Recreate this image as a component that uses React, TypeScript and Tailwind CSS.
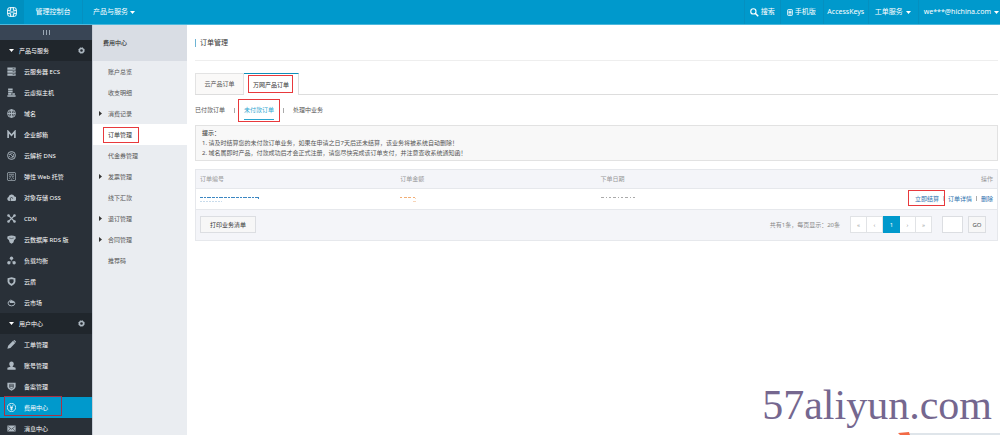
import React from "react";

type IconName =
  | "server" | "host" | "globe" | "mail" | "dns" | "web" | "cloud" | "cdn" | "rds"
  | "slb" | "shield" | "market" | "pen" | "user" | "badge" | "yen" | "message";

const shapes: Record<IconName, React.ReactNode> = {
  server: (
    <g fill="currentColor">
      <path d="M1 1h22v6H1zM1 9h22v6H1zM1 17h22v6H1z" />
      <path d="M15 4h5M15 12h5M15 20h5" stroke="#293038" strokeWidth="1.5" />
    </g>
  ),
  host: (
    <g fill="currentColor">
      <path d="M3 1h12v5H3zM3 7h12v5H3zM3 13h9v5H3zM14 14h7v4h-7zM1 19h22v4H1z" />
    </g>
  ),
  globe: (
    <g fill="none" stroke="currentColor" strokeWidth="2.5">
      <circle cx="12" cy="12" r="10.5" />
      <ellipse cx="12" cy="12" rx="5" ry="10" />
      <path d="M12 2v20M2 12h20" />
    </g>
  ),
  mail: <path d="M3 21V4l9 10 9-10v17" fill="none" stroke="currentColor" strokeWidth="4.5" />,
  dns: (
    <g fill="none" stroke="currentColor" strokeWidth="2.5">
      <circle cx="12" cy="12" r="10.5" />
      <circle cx="12" cy="12" r="6" strokeDasharray="4 2" />
      <path d="M8 8l5 4 3 5" />
    </g>
  ),
  web: (
    <g fill="none" stroke="currentColor" strokeWidth="2">
      <rect x="1" y="1" width="22" height="22" rx="4" />
      <path d="M5 6h14M5 10l3 2 4-2 4 2 3-2M6 18l3-4M18 18l-3-4M10 19h4" />
    </g>
  ),
  cloud: (
    <g>
      <path d="M6 21a5.500 5.500 0 0 1-2-10.500 8.500 8.500 0 0 1 16-1.500 6 6 0 0 1-1 12z" fill="currentColor" />
      <path d="M9 21v-6a3 3 0 0 1 6 0" fill="none" stroke="#293038" strokeWidth="2" />
    </g>
  ),
  cdn: (
    <g stroke="currentColor" strokeWidth="3" fill="currentColor">
      <path d="M4 4l16 16M20 4L4 20" />
      <circle cx="4" cy="4" r="2" /><circle cx="20" cy="4" r="2" />
      <circle cx="4" cy="20" r="2" /><circle cx="20" cy="20" r="2" />
    </g>
  ),
  rds: (
    <g>
      <path d="M1 4q11-5 22 0v6l-4 3-2 7-5 3-5-3-2-7-4-3z" fill="currentColor" />
      <path d="M6 8q6 3 12 0" fill="none" stroke="#293038" strokeWidth="1.5" />
    </g>
  ),
  slb: (
    <g fill="currentColor">
      <circle cx="12" cy="6" r="4.500" /><circle cx="5" cy="18" r="4.500" /><circle cx="19" cy="18" r="4.500" />
      <path d="M12 6v7M5 18l7-5 7 5" fill="none" stroke="currentColor" />
    </g>
  ),
  shield: <path d="M12 3l8 2v8q-1 5-8 8-7-3-8-8V5z" fill="none" stroke="currentColor" strokeWidth="5" />,
  market: (
    <g>
      <path d="M3 14a9 7 0 0 0 18 0q0-5-6-6-5-5-9 0-3 1-3 6z" fill="none" stroke="currentColor" strokeWidth="2.5" />
      <path d="M6 8h11l2 5H8z" fill="currentColor" />
    </g>
  ),
  pen: <path d="M1 23l2-8L16 2l6 6L9 21zM17 1l3-1 4 4-1 3z" fill="currentColor" />,
  user: (
    <path d="M12 1c4 0 6 3 6 7 0 3-2 5-3 6v1l8 3v5H1v-5l8-3v-1c-1-1-3-3-3-6 0-4 2-7 6-7z" fill="currentColor" />
  ),
  badge: (
    <g>
      <path d="M1 2h22v11q-2 7-11 10Q3 20 1 13z" fill="currentColor" />
      <path d="M7 6h10v9l-5 3-5-3zM7 9h10M7 12h10" fill="none" stroke="#293038" strokeWidth="1.5" />
    </g>
  ),
  yen: (
    <g fill="none" stroke="currentColor" strokeWidth="2">
      <circle cx="12" cy="12" r="11" />
      <path d="M7 5l5 7 5-7M12 12v8M8 12h8M8 16h8" />
    </g>
  ),
  message: (
    <g>
      <path d="M1 4h22v16H1z" fill="currentColor" />
      <path d="M2 6l10 8 10-8M2 19l7-7M22 19l-7-7" fill="none" stroke="#293038" strokeWidth="1.5" />
    </g>
  ),
};

const Icon = ({ name }: { name: IconName }) => (
  <svg viewBox="0 0 24 24" className="size-[9px] shrink-0" aria-hidden="true">{shapes[name]}</svg>
);

const Gear = () => (
  <svg viewBox="0 0 24 24" className="size-[7px]" fill="none" stroke="currentColor" aria-hidden="true">
    <circle cx="12" cy="12" r="7" strokeWidth="5" />
    <circle cx="12" cy="12" r="10" strokeWidth="3" strokeDasharray="4 3.85" />
  </svg>
);

const Caret = () => (
  <svg viewBox="0 0 10 6" className="h-[3px] w-[5px] shrink-0" aria-hidden="true">
    <path d="M0 0h10L5 6z" fill="currentColor" />
  </svg>
);

const products: [IconName, string][] = [
  ["server", "云服务器 ECS"], ["host", "云虚拟主机"], ["globe", "域名"], ["mail", "企业邮箱"],
  ["dns", "云解析 DNS"], ["web", "弹性 Web 托管"], ["cloud", "对象存储 OSS"], ["cdn", "CDN"],
  ["rds", "云数据库 RDS 版"], ["slb", "负载均衡"], ["shield", "云盾"], ["market", "云市场"],
];
const account: [IconName, string][] = [
  ["pen", "工单管理"], ["user", "账号管理"], ["badge", "备案管理"], ["yen", "费用中心"], ["message", "消息中心"],
];
const billing: { label: string; nested?: boolean }[] = [
  { label: "账户总览" }, { label: "收支明细" }, { label: "消费记录", nested: true }, { label: "订单管理" },
  { label: "代金券管理" }, { label: "发票管理", nested: true }, { label: "线下汇款" },
  { label: "退订管理", nested: true }, { label: "合同管理", nested: true }, { label: "推荐码" },
];

function Group({ title, items }: { title: string; items: [IconName, string][] }) {
  return (
    <section>
      <div className="flex h-[21px] items-center bg-[#20262c] pr-[7px] pl-[9px]">
        <button className="flex items-center gap-[5px]"><Caret />{title}</button>
        <button aria-label={title + "设置"} className="ml-auto text-[#aeb9c2]"><Gear /></button>
      </div>
      <ul>
        {items.map(([icon, label]) => {
          const on = label === "费用中心";
          return (
            <li key={label} className="relative">
              <a href="#" className={`flex h-[21px] items-center gap-2 pl-[7px] ${on ? "bg-[#0099cc]" : ""}`}>
                <span className={`flex ${on ? "text-white" : "text-[#aeb9c2]"}`}><Icon name={icon} /></span>
                {label}
              </a>
              {on && <span className="pointer-events-none absolute -top-px left-1 h-5 w-[58px] border border-[#a83246]" />}
            </li>
          );
        })}
      </ul>
    </section>
  );
}

const mark = "pointer-events-none absolute border border-[#e8393c]";
const topLink = "flex h-full items-center border-l border-[#0590c0]";
const pageLink = "flex w-4 items-center justify-center border-r border-[#e1e3e6]";

export default function App() {
  return (
    <div className="relative flex h-screen flex-col overflow-hidden bg-white font-['Noto_Sans','Noto_Sans_CJK_SC',sans-serif] text-[6px] leading-[10px] text-[#555]">
      <header className="flex h-[25px] shrink-0 items-center border-b border-[#4db8dc] bg-[#0099cc] text-[7px] text-white">
        <a href="#" aria-label="首页" className="flex h-full w-6 items-center justify-center bg-[#008fbf]">
          <svg viewBox="0 0 30 30" className="size-[10px]" fill="none" stroke="#fff" strokeWidth="3">
            <rect x="2" y="2" width="26" height="26" rx="6" />
            <path d="M2 10h9V2M19 2v8h9M2 20h9v8M19 28v-8h9M7 15h16" />
          </svg>
        </a>
        <a href="#" className="flex h-full w-[58px] items-center justify-center">管理控制台</a>
        <button className={`${topLink} gap-[2px] pl-[10px]`}>产品与服务<Caret /></button>
        <nav className="ml-auto flex h-full items-center">
          <a href="#" className={`${topLink} w-9 gap-[2px] pl-[5px]`}>
            <svg viewBox="0 0 24 24" className="size-[9px]" fill="none" stroke="currentColor" strokeWidth="3">
              <circle cx="9" cy="9" r="7" /><path d="M14 14l8 8" strokeWidth="4" />
            </svg>
            搜索
          </a>
          <a href="#" className={`${topLink} w-[43px] gap-[2px] pl-[6px]`}>
            <svg viewBox="0 0 20 24" className="h-[7px] w-[6px]" fill="none" stroke="currentColor" strokeWidth="3">
              <rect x="2" y="2" width="16" height="20" rx="2" /><path d="M5 8h10M5 12h10M5 17h10" />
            </svg>
            手机版
          </a>
          <a href="#" className={`${topLink} w-[45px] justify-center`}>AccessKeys</a>
          <button className={`${topLink} w-[50px] gap-[3px] pl-[6px]`}>工单服务<Caret /></button>
          <button className={`${topLink} gap-[3px] pr-px pl-[5px]`}>we***@hichina.com<Caret /></button>
        </nav>
      </header>

      <div className="flex min-h-0 flex-1">
        <aside className="w-[92px] shrink-0 bg-[#293038] text-white">
          <button aria-label="收起菜单" className="flex h-[15px] w-full items-center justify-center bg-[#394555]">
            <svg viewBox="0 0 7 5" className="h-[5px] w-[7px]" stroke="#9aa7b4"><path d="M.5 0v5M3.5 0v5M6.5 0v5" /></svg>
          </button>
          <Group title="产品与服务" items={products} />
          <Group title="用户中心" items={account} />
        </aside>

        <aside className="w-[95px] shrink-0 border-l border-[#c9ced6] bg-[#eaedf1]">
          <h2 className="flex h-9 items-center bg-[#d9dde4] pl-[10px] font-medium text-[#333]">费用中心</h2>
          <ul>
            {billing.map(({ label, nested }) => {
              const on = label === "订单管理";
              return (
                <li key={label} className="relative">
                  <a href="#" className={`flex h-[21px] items-center pl-[6px] ${on ? "bg-white text-[#333]" : ""}`}>
                    <span className="w-[9px]">
                      {nested && (
                        <svg viewBox="0 0 3 5" className="h-[5px] w-[3px]"><path d="M0 0l3 2.5L0 5z" fill="#333" /></svg>
                      )}
                    </span>
                    {label}
                  </a>
                  {on && <span className={`${mark} top-[3px] left-[10px] h-4 w-[36px]`} />}
                </li>
              );
            })}
          </ul>
        </aside>

        <main className="min-w-0 flex-1 pr-[2px] pl-2">
          <div className="flex h-9 items-center border-b border-[#eee]">
            <h1 className="flex items-center gap-1 text-[7px] text-[#333]">
              <span className="h-2 w-px bg-[#6db4d4]" />订单管理
            </h1>
          </div>
          <div role="tablist" className="mt-3 flex h-[22px] border-b border-[#ddd]">
            <button role="tab" aria-selected="false" className="w-[49px] border border-b-0 border-[#e3e3e3] bg-[#faf9f8]">云产品订单</button>
            <button role="tab" aria-selected="true" className="relative -mb-px w-[55px] border-t border-r border-t-[#0e8fb9] border-r-[#ddd] bg-white text-[#333]">
              万网产品订单
              <span className={`${mark} top-[1px] left-1 h-[18px] w-[45px]`} />
            </button>
          </div>
          <nav className="flex h-[30px] items-center gap-[9px]">
            <a href="#">已付款订单</a>
            <span className="h-[5px] w-px bg-[#aaa]" />
            <a href="#" className="relative text-[#2ba5cf]">
              <span className="block border-y border-t-transparent border-b-[#2ba5cf] py-[4px]">未付款订单</span>
              <span className={`${mark} -top-[1px] -left-[6px] h-[23px] w-[42px]`} />
            </a>
            <span className="h-[5px] w-px bg-[#aaa]" />
            <a href="#">处理中业务</a>
          </nav>
          <div className="border border-[#e2e2e2] bg-[#f8f8f8] px-[6px] py-[2px]">
            <p className="font-medium text-[#444]">提示：</p>
            <p>1. 请及时结算您的未付款订单业务，如果在申请之日7天后还未结算，该业务将被系统自动删除！</p>
            <p>2. 域名属即时产品，付款成功后才会正式注册，请您尽快完成该订单支付，并注意查收系统通知函！</p>
          </div>

          <div className="mt-2 border border-[#e6e8ec]">
            <table className="w-full table-fixed border-collapse">
              <thead className="bg-[#f4f5f9] text-[#999]">
                <tr className="h-[18px] border-b border-[#e6e8ec] text-left">
                  <th className="w-1/4 pl-1 font-normal">订单编号</th>
                  <th className="w-1/4 pl-1 font-normal">订单金额</th>
                  <th className="w-1/4 pl-1 font-normal">下单日期</th>
                  <th className="w-1/4 pr-1 text-right font-normal">操作</th>
                </tr>
              </thead>
              <tbody>
                <tr className="h-[21px] border-b border-[#e6e8ec]">
                  <td className="pl-1">
                    <svg viewBox="0 0 60 6" className="h-[6px] w-[60px]" fill="none">
                      <path d="M0 1.5h58" stroke="#3c87c2" strokeDasharray="3 1 2 1 4 1" />
                      <path d="M58.5 1v2" stroke="#3c87c2" />
                      <path d="M0 5.5h22" stroke="#c9dcec" strokeDasharray="2 1" />
                    </svg>
                  </td>
                  <td className="pl-1">
                    <svg viewBox="0 0 17 6" className="h-[6px] w-[17px]" fill="none">
                      <path d="M0 1.5h16" stroke="#f2ae75" strokeDasharray="2 2 3 1 3 2" />
                      <path d="M15.5 2v1M13 5.5h3" stroke="#f8d5b8" />
                    </svg>
                  </td>
                  <td className="pl-1">
                    <svg viewBox="0 0 36 6" className="h-[6px] w-[36px]" fill="none">
                      <path d="M0 1.5h34" stroke="#aaa" strokeDasharray="3 2 1 2 2 2" />
                    </svg>
                  </td>
                  <td className="pr-1">
                    <div className="flex items-center justify-end gap-1 text-[#2a6fae]">
                      <a href="#" className="relative">
                        立即结算
                        <span className={`${mark} -top-[4px] -left-[7px] h-4 w-[37px]`} />
                      </a>
                      <span className="h-[5px] w-px bg-[#ccc]" />
                      <a href="#">订单详情</a>
                      <span className="h-[5px] w-px bg-[#aaa]" />
                      <a href="#">删除</a>
                    </div>
                  </td>
                </tr>
              </tbody>
            </table>
            <div className="flex h-[30px] items-center bg-[#f4f5f9] pr-[11px] pl-1">
              <button className="h-[17px] w-14 border border-[#dcdee2] bg-[#f7f7f7] text-[#333]">打印业务清单</button>
              <span className="ml-auto text-[#888]">共有1条，每页显示：20条</span>
              <nav aria-label="分页" className="ml-[10px] flex h-[17px] border border-r-0 border-[#e1e3e6] bg-white text-[#999]">
                <a href="#" className={pageLink}>«</a>
                <a href="#" className={pageLink}>‹</a>
                <a href="#" aria-current="page" className="-my-px flex w-[17px] items-center justify-center bg-[#0099cc] text-white">1</a>
                <a href="#" className={pageLink}>›</a>
                <a href="#" className={pageLink}>»</a>
              </nav>
              <input aria-label="页码" className="ml-[10px] h-[17px] w-[21px] border border-[#dcdee2] bg-white px-[2px]" />
              <button className="ml-[5px] h-[17px] w-[18px] border border-[#dcdee2] bg-[#f7f7f7]">GO</button>
            </div>
          </div>
        </main>
      </div>

      <p className="absolute right-[8px] bottom-[5px] font-['Liberation_Serif',serif] text-[42px] leading-[50px] text-[#75678f]">57aliyun.com</p>
      <div className="absolute right-0 bottom-0 flex h-[3px] w-[102px] items-end">
        <svg viewBox="0 0 12 3" className="h-[3px] w-3"><path d="M0 1l11-1 1 3H2z" fill="#f26a45" /></svg>
        <span className="h-[2px] flex-1 bg-[#dfe5ea]" />
      </div>
    </div>
  );
}
